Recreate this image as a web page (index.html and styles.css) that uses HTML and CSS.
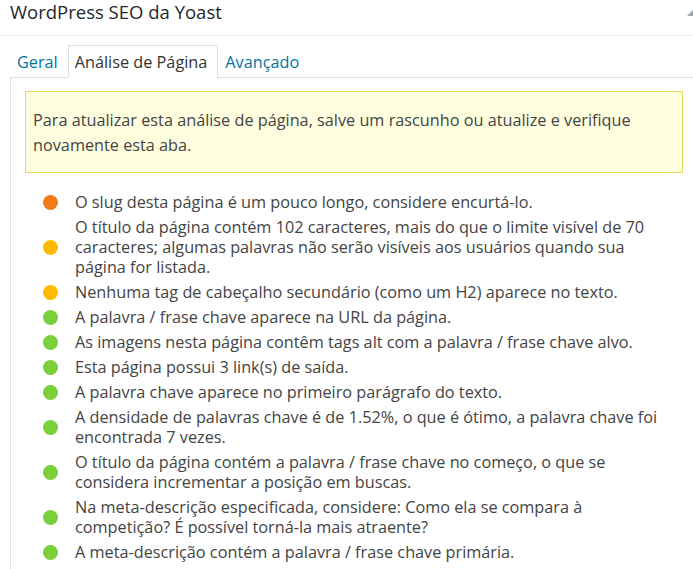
FILE: index.html
```html
<!DOCTYPE html>
<html lang="pt-BR">
<head>
<meta charset="utf-8">
<title>WordPress SEO da Yoast</title>
<link rel="stylesheet" href="styles.css">
</head>
<body>
<div class="postbox">
  <div class="postbox-header">
    <h2 class="hndle">WordPress SEO da Yoast</h2>
    <span class="toggle-arrow"></span>
  </div>
  <div class="inside">
    <ul class="tabs">
      <li class="tab"><a href="#">Geral</a></li>
      <li class="tab active"><a href="#">Análise de Página</a></li>
      <li class="tab"><a href="#">Avançado</a></li>
    </ul>
    <div class="panel">
      <div class="notice">
        <p>Para atualizar esta análise de página, salve um rascunho ou atualize e verifique novamente esta aba.</p>
      </div>
      <ul class="results">
        <li class="result"><span class="dot poor"></span><span class="msg">O slug desta página é um pouco longo, considere encurtá-lo.</span></li>
        <li class="result"><span class="dot ok"></span><span class="msg">O título da página contém 102 caracteres, mais do que o limite visível de 70 caracteres; algumas palavras não serão visíveis aos usuários quando sua página for listada.</span></li>
        <li class="result"><span class="dot ok"></span><span class="msg">Nenhuma tag de cabeçalho secundário (como um H2) aparece no texto.</span></li>
        <li class="result"><span class="dot good"></span><span class="msg">A palavra / frase chave aparece na URL da página.</span></li>
        <li class="result"><span class="dot good"></span><span class="msg">As imagens nesta página contêm tags alt com a palavra / frase chave alvo.</span></li>
        <li class="result"><span class="dot good"></span><span class="msg">Esta página possui 3 link(s) de saída.</span></li>
        <li class="result"><span class="dot good"></span><span class="msg">A palavra chave aparece no primeiro parágrafo do texto.</span></li>
        <li class="result"><span class="dot good"></span><span class="msg">A densidade de palavras chave é de 1.52%, o que é ótimo, a palavra chave foi encontrada 7 vezes.</span></li>
        <li class="result"><span class="dot good"></span><span class="msg">O título da página contém a palavra / frase chave no começo, o que se considera incrementar a posição em buscas.</span></li>
        <li class="result"><span class="dot good"></span><span class="msg">Na meta-descrição especificada, considere: Como ela se compara à competição? É possível torná-la mais atraente?</span></li>
        <li class="result"><span class="dot good"></span><span class="msg">A meta-descrição contém a palavra / frase chave primária.</span></li>
      </ul>
    </div>
  </div>
</div>
</body>
</html>
```
FILE: styles.css
```css
html, body {
  margin: 0;
  padding: 0;
  background: #fff;
  overflow: hidden;
}
body {
  font-family: "Open Sans", "Noto Sans", sans-serif;
  color: #444;
}
.postbox {
  width: 720px;
}
.postbox-header {
  height: 35px;
  border-bottom: 1px solid #eee;
  display: flex;
  align-items: flex-start;
  justify-content: space-between;
}
.hndle {
  margin: 0;
  padding: 2px 0 0 10px;
  font-size: 18.5px;
  font-weight: 400;
  line-height: 20px;
  color: #23282d;
}
.toggle-arrow {
  width: 0;
  height: 0;
  margin: 9px 19px 0 0;
  border-left: 7px solid transparent;
  border-right: 7px solid transparent;
  border-bottom: 7px solid #a0a5aa;
}
.inside {
  padding: 9px 23px 0 10px;
}
.tabs {
  list-style: none;
  margin: 0 0 -1px;
  padding: 0;
  display: flex;
  position: relative;
  z-index: 1;
}
.tab {
  height: 32px;
  padding: 0 6px;
  border: 1px solid transparent;
  border-bottom: none;
  display: flex;
  align-items: center;
}
.tab:first-child {
  margin-right: 3px;
}
.tab a {
  text-decoration: none;
  color: #0074a2;
  font-size: 16.25px;
}
.tab.active {
  background: #fff;
  border-color: #dfdfdf;
  padding: 0 10px 0 6px;
}
.tab.active a {
  color: #333;
}
.panel {
  border-left: 1px solid #dfdfdf;
  border-top: 1px solid #dfdfdf;
  padding: 13px 14px 10px;
}
.notice {
  background: #ffffe0;
  border: 1px solid #e6db55;
  padding: 16px 7px 14px;
}
.notice p {
  margin: 0;
  font-size: 16.25px;
  line-height: 25px;
  color: #444;
}
.results {
  list-style: none;
  margin: 19px 0 0;
  padding: 0 14px 0 18px;
}
.result {
  display: flex;
  align-items: center;
  margin-bottom: 5px;
  font-size: 16.25px;
  line-height: 20px;
}
.dot {
  flex: none;
  width: 15px;
  height: 15px;
  border-radius: 50%;
  margin-right: 17px;
}
.dot.poor { background: #ee7c1b; }
.dot.ok { background: #ffba00; }
.dot.good { background: #7ad03a; }
```
